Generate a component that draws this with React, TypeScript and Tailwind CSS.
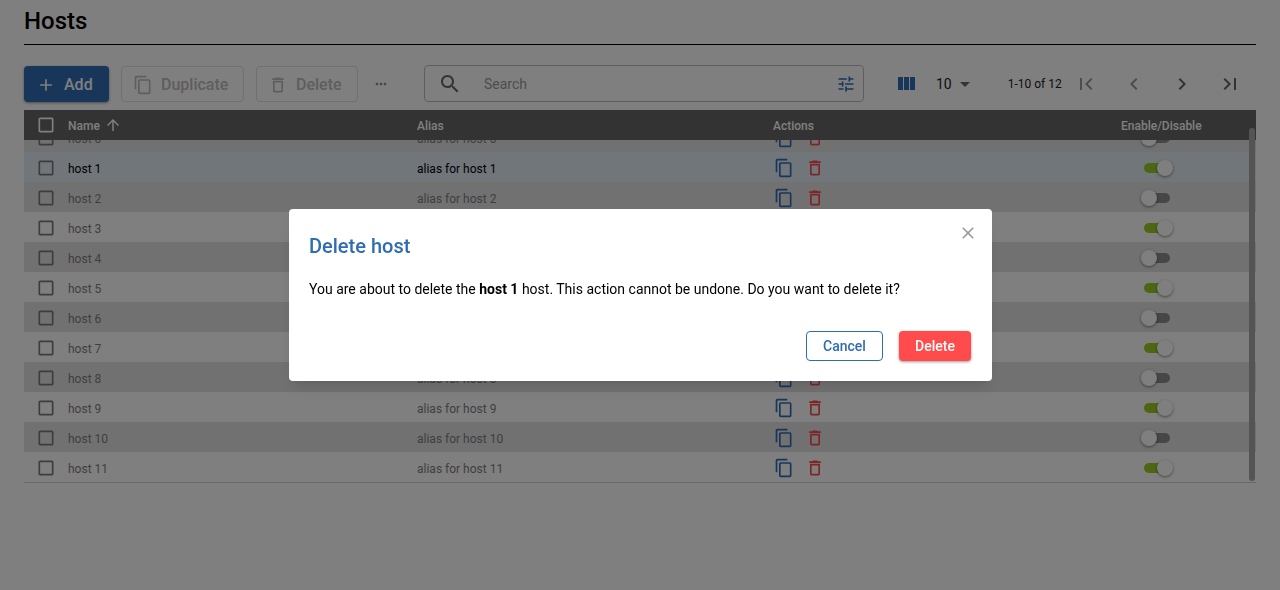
import React from 'react';

const P = {
  copy: 'M16 1H4c-1.1 0-2 .9-2 2v14h2V3h12V1zm3 4H8c-1.1 0-2 .9-2 2v14c0 1.1.9 2 2 2h11c1.1 0 2-.9 2-2V7c0-1.1-.9-2-2-2zm0 16H8V7h11v14z',
  trash: 'M6 19c0 1.1.9 2 2 2h8c1.1 0 2-.9 2-2V7H6v12zM8 9h8v10H8V9zm7.5-5l-1-1h-5l-1 1H5v2h14V4z',
  tune: 'M3 17v2h6v-2H3zM3 5v2h10V5H3zm10 16v-2h8v-2h-8v-2h-2v6h2zM7 9v2H3v2h4v2h2V9H7zm14 4v-2H11v2h10zm-6-4h2V7h4V5h-4V3h-2v6z',
  search: 'M15.5 14h-.79l-.28-.27C15.41 12.59 16 11.11 16 9.5 16 5.91 13.09 3 9.5 3S3 5.91 3 9.5 5.91 16 9.5 16c1.61 0 3.09-.59 4.23-1.57l.27.28v.79l5 4.99L20.49 19l-4.99-5zm-6 0C7.01 14 5 11.99 5 9.5S7.01 5 9.5 5 14 7.01 14 9.5 11.99 14 9.5 14z',
  columns: 'M10 18h5V5h-5v13zm-6 0h5V5H4v13zM16 5v13h5V5h-5z',
  first: 'M18.41 16.59L13.82 12l4.59-4.59L17 6l-6 6 6 6zM6 6h2v12H6z',
  last: 'M5.59 7.41L10.18 12l-4.59 4.59L7 18l6-6-6-6zM16 6h2v12h-2z',
  left: 'M15.41 7.41L14 6l-6 6 6 6 1.41-1.41L10.83 12z',
  right: 'M10 6L8.59 7.41 13.17 12l-4.58 4.59L10 18l6-6z',
  add: 'M19 13h-6v6h-2v-6H5v-2h6V5h2v6h6v2z',
  up: 'M4 12l1.41 1.41L11 7.83V20h2V7.83l5.58 5.59L20 12l-8-8-8 8z',
  box: 'M19 5v14H5V5h14m0-2H5c-1.1 0-2 .9-2 2v14c0 1.1.9 2 2 2h14c1.1 0 2-.9 2-2V5c0-1.1-.9-2-2-2z',
  more: 'M6 10c-1.1 0-2 .9-2 2s.9 2 2 2 2-.9 2-2-.9-2-2-2zm12 0c-1.1 0-2 .9-2 2s.9 2 2 2 2-.9 2-2-.9-2-2-2zm-6 0c-1.1 0-2 .9-2 2s.9 2 2 2 2-.9 2-2-.9-2-2-2z',
  close: 'M19 6.41L17.59 5 12 10.59 6.41 5 5 6.41 10.59 12 5 17.59 6.41 19 12 13.41 17.59 19 19 17.59 13.41 12z',
  drop: 'M7 10l5 5 5-5z',
};

const Icon = ({ d, className }: { d: string; className: string }) => (
  <svg viewBox="0 0 24 24" fill="currentColor" className={className}>
    <path d={d} />
  </svg>
);

const Switch = ({ on }: { on: boolean }) => (
  <div className={`relative ml-[23px] h-[10px] w-[26px] rounded-full ${on ? 'bg-[#9ccb28]' : 'bg-[#8e8e8e]'}`}>
    <div
      className={`absolute top-[-3px] h-4 w-4 rounded-full bg-white shadow-[0_1px_3px_rgba(0,0,0,0.45)] ${on ? 'left-[13px]' : 'left-[-3px]'}`}
    />
  </div>
);

const gridCols = 'grid grid-cols-[44px_349px_356px_348px_135px] items-center';

const Row = ({ n }: { n: number }) => {
  const active = n === 1;
  const stripe = n % 2 === 0;
  return (
    <div className={`${gridCols} h-[30px] pt-[2px] text-xs ${active ? 'bg-[#e2ecf6] text-black' : stripe ? 'bg-[#e2e2e2] text-[#7f7f7f]' : 'bg-white text-[#7f7f7f]'}`}>
      <div className="pl-[12px]">
        <Icon d={P.box} className="h-5 w-5 text-[#7a7a7a]" />
      </div>
      <div className="pt-[2px]">host {n}</div>
      <div className="pt-[2px]">alias for host {n}</div>
      <div className="flex items-center gap-[11px] pl-[1px]">
        <Icon d={P.copy} className="h-5 w-5 text-[#2e6db4]" />
        <Icon d={P.trash} className="h-5 w-5 text-[#ff4b4b]" />
      </div>
      <div>
        <Switch on={n % 2 === 1} />
      </div>
    </div>
  );
};

export default function App() {
  const hosts = [0, 1, 2, 3, 4, 5, 6, 7, 8, 9, 10, 11];
  return (
    <div className="relative h-[590px] w-[1280px] overflow-hidden bg-white px-6 font-['Roboto',sans-serif] text-black">
      <div className="flex h-[45px] items-center border-b border-black pb-[3px]">
        <h1 className="text-2xl leading-none font-medium">Hosts</h1>
      </div>

      {/* toolbar */}
      <div className="mt-[21px] flex h-9 items-center">
        <button className="flex h-9 w-[85px] items-center gap-[8px] rounded bg-[#2e6db4] pt-[1px] pl-[12px] text-base font-medium text-white shadow-[0_1px_3px_rgba(0,0,0,0.4)]">
          <Icon d={P.add} className="h-5 w-5" /> Add
        </button>
        <button className="ml-3 flex h-9 w-[123px] items-center gap-[8px] rounded border border-[#e0e0e0] pt-[1px] pl-[11px] text-base font-medium text-[#bdbdbd]">
          <Icon d={P.copy} className="h-5 w-5" /> Duplicate
        </button>
        <button className="ml-3 flex h-9 w-[102px] items-center gap-[8px] rounded border border-[#e0e0e0] pt-[1px] pl-[11px] text-base font-medium text-[#bdbdbd]">
          <Icon d={P.trash} className="h-5 w-5" /> Delete
        </button>
        <Icon d={P.more} className="ml-[15px] h-4 w-4 text-[#8a8a8a]" />
        <div className="ml-[35px] -mt-[1px] flex h-[37px] w-[440px] items-center rounded border border-[#bdbdbd] pr-[7px] pl-[13px]">
          <Icon d={P.search} className="h-6 w-6 text-[#666]" />
          <span className="ml-[22px] flex-1 text-sm text-[#9a9a9a]">Search</span>
          <Icon d={P.tune} className="h-5 w-5 text-[#2e6db4]" />
        </div>
        <Icon d={P.columns} className="ml-[30px] h-6 w-6 text-[#2e6db4]" />
        <span className="ml-[18px] text-sm text-[#222]">10</span>
        <Icon d={P.drop} className="ml-[1px] h-6 w-6 text-[#666]" />
        <span className="ml-[31px] text-xs text-[#222]">1-10 of 12</span>
        <Icon d={P.first} className="ml-[12px] h-6 w-6 text-[#9a9a9a]" />
        <Icon d={P.left} className="ml-[24px] h-6 w-6 text-[#9a9a9a]" />
        <Icon d={P.right} className="ml-[24px] h-6 w-6 text-[#666]" />
        <Icon d={P.last} className="ml-[24px] h-6 w-6 text-[#666]" />
      </div>

      {/* table */}
      <div className="relative mt-2 h-[373px] border-b border-[#d0d0d0]">
        <div className={`${gridCols} relative z-10 h-[30px] bg-[#666666] pt-[2px] text-xs font-medium text-white`}>
          <div className="pl-[12px]">
            <Icon d={P.box} className="-mt-[2px] h-5 w-5 text-white" />
          </div>
          <div className="flex items-center gap-[4px]">
            Name <Icon d={P.up} className="-mt-[2px] h-[18px] w-[18px]" />
          </div>
          <div>Alias</div>
          <div>Actions</div>
          <div>Enable/Disable</div>
        </div>
        <div className="h-[342px] overflow-hidden">
          <div className="-mt-[18px]">
            {hosts.map((n) => (
              <Row key={n} n={n} />
            ))}
          </div>
        </div>
        <div className="absolute top-[18px] right-[1px] z-20 h-[353px] w-[6px] rounded-full bg-[#a8a8a8]" />
      </div>

      {/* dialog */}
      <div className="fixed inset-0 z-30 flex items-center justify-center bg-black/50 pl-px">
        <div className="relative h-[172px] w-[703px] rounded bg-white pt-[25px] pr-[21px] pl-5 shadow-lg">
          <button className="absolute top-[14px] right-[14px] text-[#9e9e9e]">
            <Icon d={P.close} className="h-[20px] w-[20px]" />
          </button>
          <h2 className="text-xl leading-6 font-medium text-[#2e6db4]">Delete host</h2>
          <p className="mt-[21px] text-sm leading-5">
            You are about to delete the <b className="font-bold">host 1</b> host. This action cannot be undone. Do you want to delete it?
          </p>
          <div className="mt-[32px] flex justify-end gap-4">
            <button className="h-[30px] w-[77px] rounded border border-[#2e6db4] text-sm font-medium text-[#2e6db4]">Cancel</button>
            <button className="h-[30px] w-[72px] rounded bg-[#ff4b4b] text-sm font-medium text-white shadow-[0_1px_3px_rgba(0,0,0,0.4)]">Delete</button>
          </div>
        </div>
      </div>
    </div>
  );
}
